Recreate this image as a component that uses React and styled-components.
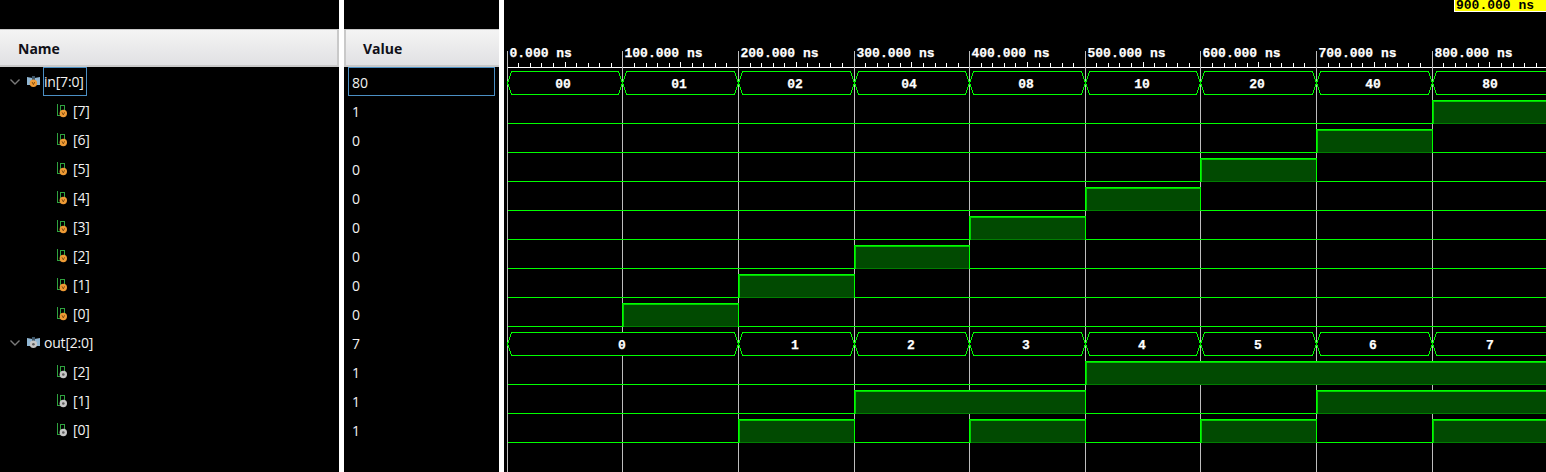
import React from 'react';
import styled, { createGlobalStyle } from 'styled-components';

const X0 = 507.3;
const NS = 1.156;
const RIGHT = 1546;
const xAt = (ns) => Math.floor(X0 + ns * NS) + 0.5;
const rowLow = (k) => 94.5 + 29 * k;
const rowHigh = (k) => 71.5 + 29 * k;

const rows = [
  { name: 'in[7:0]', value: '80', bus: true, tone: 'orange', selected: true },
  { name: '[7]', value: '1', tone: 'orange', high: [[800, null]] },
  { name: '[6]', value: '0', tone: 'orange', high: [[700, 800]] },
  { name: '[5]', value: '0', tone: 'orange', high: [[600, 700]] },
  { name: '[4]', value: '0', tone: 'orange', high: [[500, 600]] },
  { name: '[3]', value: '0', tone: 'orange', high: [[400, 500]] },
  { name: '[2]', value: '0', tone: 'orange', high: [[300, 400]] },
  { name: '[1]', value: '0', tone: 'orange', high: [[200, 300]] },
  { name: '[0]', value: '0', tone: 'orange', high: [[100, 200]] },
  { name: 'out[2:0]', value: '7', bus: true, tone: 'grey' },
  { name: '[2]', value: '1', tone: 'grey', high: [[500, null]] },
  { name: '[1]', value: '1', tone: 'grey', high: [[300, 500], [700, null]] },
  { name: '[0]', value: '1', tone: 'grey', high: [[200, 300], [400, 500], [600, 700], [800, null]] },
];

// from, to, text, where the text is centred
const inBus = [
  [0, 100, '00', 563], [100, 200, '01', 679], [200, 300, '02', 795], [300, 400, '04', 909],
  [400, 500, '08', 1026], [500, 600, '10', 1142], [600, 700, '20', 1257], [700, 800, '40', 1373],
  [800, null, '80', 1490],
];
const outBus = [
  [0, 200, '0', 622], [200, 300, '1', 795], [300, 400, '2', 911], [400, 500, '3', 1026],
  [500, 600, '4', 1142], [600, 700, '5', 1258], [700, 800, '6', 1373], [800, null, '7', 1490],
];

const GlobalStyle = createGlobalStyle`
  html, body {
    margin: 0;
    height: 472px;
    overflow: hidden;
    background: #000;
  }
`;

const Page = styled.div`
  display: flex;
  width: 1546px;
  height: 472px;
  background: #000;
  color: #f2f2f2;
  font-family: "Open Sans", "Noto Sans", sans-serif;
  font-size: 14px;
  overflow: hidden;
`;

const Panel = styled.div`
  width: ${(p) => p.$width}px;
  flex: none;
  padding-top: 29px;
  box-sizing: border-box;
`;

const Splitter = styled.div`
  width: 5px;
  flex: none;
  background: #fff;
`;

const Header = styled.div`
  height: 38px;
  box-sizing: border-box;
  display: flex;
  align-items: center;
  padding: 2px 0 0 ${(p) => p.$indent}px;
  background: linear-gradient(#f4f4f4, #e1e1e3);
  border: 1px solid #c9c9c9;
  border-width: 1px ${(p) => (p.$side === 'left' ? 2 : 0)}px 2px ${(p) => (p.$side === 'left' ? 0 : 2)}px;
  color: #101018;
  font-weight: 700;
  font-size: 14px;
`;

const Row = styled.div`
  height: 29px;
  display: flex;
  align-items: center;
  padding-left: ${(p) => (p.$bus ? 10 : 56)}px;
`;

const Chevron = styled.svg`
  width: 10px;
  height: 6px;
  margin-right: 7px;
  flex: none;
`;

const IconSvg = styled.svg`
  flex: none;
  margin-right: ${(p) => (p.$bus ? 3 : 6)}px;
`;

const Label = styled.span`
  line-height: 27px;
  letter-spacing: -0.2px;
  border: 1px solid ${(p) => (p.$selected ? '#4b8fc4' : 'transparent')};
  padding: 0 2px 0 0;
  margin-left: -1px;
`;

const ValueList = styled.div`
  padding-left: 4px;
`;

const ValueRow = styled.div`
  width: 147px;
  height: 29px;
  box-sizing: border-box;
  padding-left: 3px;
  line-height: 29px;
  border: 1px solid ${(p) => (p.$selected ? '#4b8fc4' : 'transparent')};
`;

const WavePanel = styled.div`
  position: relative;
  flex: 1;
`;

const CursorTag = styled.span`
  position: absolute;
  top: 0;
  right: 0;
  width: 92px;
  height: 12px;
  box-sizing: border-box;
  padding-left: 1px;
  background: #ff0;
  border: solid #fff;
  border-width: 0 0 1px 1px;
  color: #000;
  font: 700 13px/11px "Liberation Mono", monospace;
  white-space: pre;
`;

const WaveSvg = styled.svg`
  display: block;
  width: 100%;
  height: 100%;
  shape-rendering: crispEdges;

  text {
    font-family: "Liberation Mono", monospace;
    font-weight: 700;
    font-size: 13px;
    fill: #fff;
    stroke: #fff;
    stroke-width: 0.25px;
    shape-rendering: auto;
  }
`;

const Dot = ({ cx, cy, tone }) =>
  tone === 'orange' ? (
    <>
      <circle cx={cx} cy={cy} r="3.7" fill="#ee9a35" />
      <path d={`M${cx - 1.3} ${cy - 1.2} L${cx} ${cy + 1.4} L${cx + 1.3} ${cy - 1.2}`} fill="none" stroke="#6b3d08" strokeWidth="0.8" />
    </>
  ) : (
    <>
      <circle cx={cx} cy={cy} r="3.7" fill="#c6c6c6" />
      <circle cx={cx} cy={cy} r="1.3" fill="#5c5c5c" />
    </>
  );

const BusIcon = ({ tone }) => (
  <IconSvg $bus width="14" height="13" viewBox="0 -1 14 13">
    <path d="M0 1 L5.5 2 V9 H0 Z" fill="#8fb6d4" />
    <path d="M13 1 L7.5 2 V9 H13 Z" fill="#8fb6d4" />
    <path d="M5 0 H8 V5 H5 Z" fill="#3f5566" />
    <Dot cx={6.4} cy={7.2} tone={tone} />
  </IconSvg>
);

const BitIcon = ({ tone }) => (
  <IconSvg width="11" height="15" viewBox="0 -1 11 15">
    <path d="M1.5 0 V11.5 H4.5 V1.5 H8.5 V6" fill="none" stroke="#2fa33f" strokeWidth="1.2" shapeRendering="crispEdges" />
    <Dot cx={7.3} cy={9.5} tone={tone} />
  </IconSvg>
);

const Ruler = () => {
  const ticks = [];
  for (let ns = 0; ns * NS + X0 < RIGHT; ns += 10) {
    if (ns % 100 !== 0) {
      const x = xAt(ns);
      ticks.push(<line key={ns} x1={x} x2={x} y1={ns % 50 === 0 ? 62 : 63} y2={67} stroke="#fff" />);
    }
  }
  return (
    <g>
      <line x1={xAt(0)} x2={RIGHT} y1={67.5} y2={67.5} stroke="#fff" />
      {ticks}
      {[0, 100, 200, 300, 400, 500, 600, 700, 800].map((ns) => (
        <g key={ns}>
          <line x1={xAt(ns)} x2={xAt(ns)} y1={51} y2={472} stroke="#bdbdbd" />
          <text x={xAt(ns) + 2} y={57}>{`${ns}.000 ns`}</text>
        </g>
      ))}
    </g>
  );
};

const BusTrace = ({ k, segments }) => {
  const top = rowHigh(k);
  const bottom = rowLow(k);
  const mid = (top + bottom) / 2;
  return (
    <g>
      {segments.map(([from, to, label, labelX]) => {
        const a = xAt(from);
        const b = to === null ? RIGHT + 10 : xAt(to);
        return (
          <g key={from}>
            <path
              d={`M${a} ${mid} L${a + 4} ${top} H${b - 4} L${b} ${mid} L${b - 4} ${bottom} H${a + 4} Z`}
              fill="#000"
              stroke="#0f0"
            />
            <text x={labelX} y={mid + 4.5} textAnchor="middle">{label}</text>
          </g>
        );
      })}
    </g>
  );
};

const BitTrace = ({ k, high }) => {
  const top = rowHigh(k);
  const bottom = rowLow(k);
  return (
    <g>
      <line x1={xAt(0)} x2={RIGHT} y1={bottom} y2={bottom} stroke="#0f0" />
      {high.map(([from, to]) => {
        const a = xAt(from);
        const b = to === null ? RIGHT + 5 : xAt(to);
        return (
          <g key={from}>
            <rect x={a} y={top} width={b - a} height={bottom - top} fill="#014a01" stroke="#017d01" />
            <path d={`M${a} ${bottom} V${top} H${b} V${bottom}`} fill="none" stroke="#0f0" />
            <path d={`M${a + 1} ${bottom} V${top + 1} H${b - 1}`} fill="none" stroke="#00d000" />
          </g>
        );
      })}
    </g>
  );
};

export default function App() {
  return (
    <Page>
      <GlobalStyle />
      <Panel $width={339}>
        <Header $side="left" $indent={18}>Name</Header>
        {rows.map((row, i) => (
          <Row key={i} $bus={row.bus}>
            {row.bus && (
              <Chevron viewBox="0 0 10 6">
                <path d="M0.5 0.5 L5 5 L9.5 0.5" fill="none" stroke="#7a7a7a" strokeWidth="1.4" />
              </Chevron>
            )}
            {row.bus ? <BusIcon tone={row.tone} /> : <BitIcon tone={row.tone} />}
            <Label $selected={row.selected}>{row.name}</Label>
          </Row>
        ))}
      </Panel>
      <Splitter />
      <Panel $width={155}>
        <Header $side="right" $indent={17}>Value</Header>
        <ValueList>
          {rows.map((row, i) => (
            <ValueRow key={i} $selected={row.selected}>{row.value}</ValueRow>
          ))}
        </ValueList>
      </Panel>
      <Splitter />
      <WavePanel>
        <WaveSvg viewBox="504 0 1042 472">
          <Ruler />
          {rows.map((row, k) => {
            if (!row.bus) return <BitTrace key={k} k={k} high={row.high} />;
            return <BusTrace key={k} k={k} segments={k === 0 ? inBus : outBus} />;
          })}
        </WaveSvg>
        <CursorTag>900.000 ns</CursorTag>
      </WavePanel>
    </Page>
  );
}
